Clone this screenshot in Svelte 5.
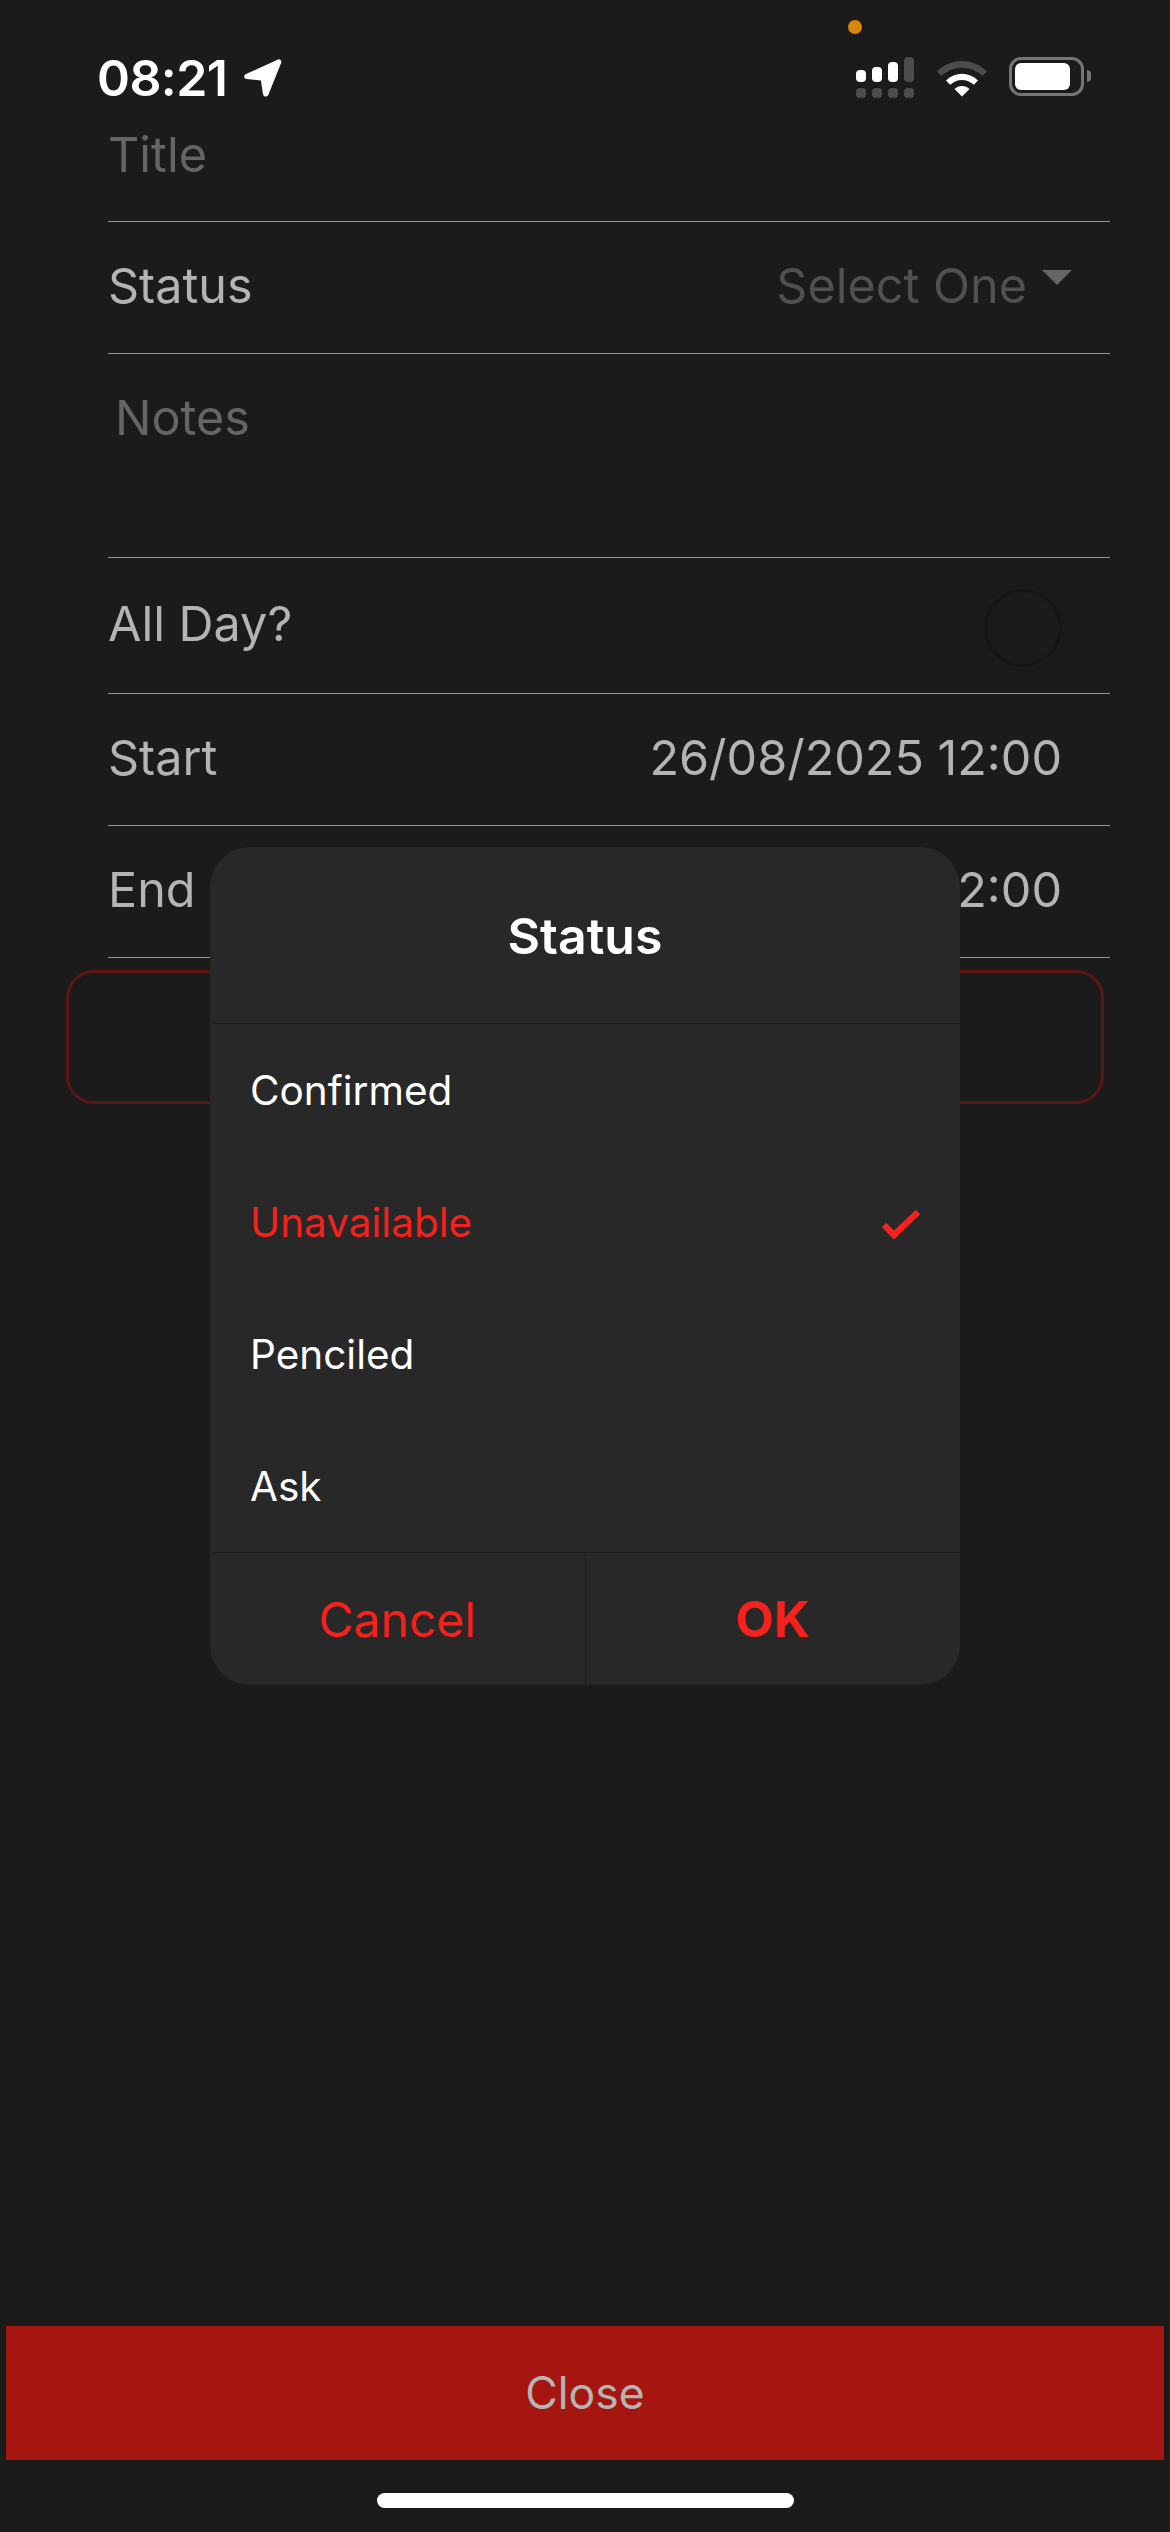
<script>
  const options = [
    { label: 'Confirmed', active: false },
    { label: 'Unavailable', active: true },
    { label: 'Penciled', active: false },
    { label: 'Ask', active: false }
  ];
</script>

<div class="page">
  <div class="dot"></div>
  <header class="status">
    <div class="clock">
      <span>08:21</span>
      <svg class="arrow" width="40" height="40" viewBox="0 0 40 40"><path d="M35 1.500C37 .8 39 2.500 38.200 4.800L25.500 36.500C24.200 39.500 20.500 39.200 20 36L17.900 22.500L3.500 21C.5 20.500 .3 17.200 3 16Z" fill="#fff"/></svg>
    </div>
    <div class="indicators">
      <svg width="60" height="42" viewBox="0 0 60 42">
        <rect x="0" y="13" width="10" height="12" rx="4" fill="#fff"/>
        <rect x="16" y="10" width="10" height="15" rx="4" fill="#fff"/>
        <rect x="32" y="5" width="10" height="20" rx="4" fill="#fff"/>
        <rect x="48" y="0" width="10" height="25" rx="4" fill="#4c4c4c"/>
        <rect x="0" y="31" width="10" height="10" rx="3.500" fill="#4c4c4c"/>
        <rect x="16" y="31" width="10" height="10" rx="3.500" fill="#4c4c4c"/>
        <rect x="32" y="31" width="10" height="10" rx="3.500" fill="#4c4c4c"/>
        <rect x="48" y="31" width="10" height="10" rx="3.500" fill="#4c4c4c"/>
      </svg>
      <svg class="wifi" width="52" height="38" viewBox="0 0 52 38">
        <path d="M1 12.500C15 -1.500 37 -1.500 51 12.500L46.500 17C35 6 17 6 5.500 17Z" fill="#4c4c4c"/>
        <path d="M10 21.500C19 12.500 33 12.500 42 21.500L37.800 25.800C31 19.500 21 19.500 14.200 25.800Z" fill="#fff"/>
        <path d="M18.500 30C22.500 26 29.500 26 33.500 30L26 37.500Z" fill="#fff"/>
      </svg>
      <div class="battery"><div class="cell"></div><div class="nub"></div></div>
    </div>
  </header>

  <section class="form">
    <div class="row title-row"><span class="placeholder">Title</span></div>
    <div class="row"><span>Status</span><span class="select">Select One<i class="caret"></i></span></div>
    <div class="row notes"><span class="placeholder">Notes</span></div>
    <div class="row tall"><span>All Day?</span><i class="radio"></i></div>
    <div class="row"><span>Start</span><span class="value">26/08/2025 12:00</span></div>
    <div class="row"><span>End</span><span class="value">26/08/2025 12:00</span></div>
  </section>
  <div class="outline"></div>

  <div class="spacer"></div>
  <button class="close">Close</button>
  <div class="home"></div>

  <div class="dialog">
    <h2>Status</h2>
    <ul>
      {#each options as o}
        <li class:active={o.active}>
          <span>{o.label}</span>
          {#if o.active}
            <svg width="38" height="36" viewBox="0 0 38 36"><path d="M2 21L12 31L36 8" fill="none" stroke="#f5211c" stroke-width="6.500"/></svg>
          {/if}
        </li>
      {/each}
    </ul>
    <footer>
      <button>Cancel</button>
      <button class="ok">OK</button>
    </footer>
  </div>
</div>

<style>
  :global(body) { margin: 0; background: #1b1b1b; }
  .page {
    position: relative;
    width: 1170px;
    height: 2532px;
    overflow: hidden;
    display: flex;
    flex-direction: column;
    background: #1b1b1b;
    font-family: Inter, "Noto Sans", sans-serif;
    color: #b4b4b4;
  }
  .dot {
    position: absolute;
    left: 848px;
    top: 20px;
    width: 14px;
    height: 14px;
    border-radius: 50%;
    background: #d9860f;
  }
  .status {
    height: 110px;
    padding: 0 86px 0 97px;
    box-sizing: border-box;
    display: flex;
    justify-content: space-between;
    align-items: flex-start;
    flex: none;
  }
  .clock {
    display: flex;
    align-items: center;
    gap: 16px;
    margin-top: 48px;
    height: 60px;
    color: #fff;
    font-size: 50px;
    font-weight: 600;
    letter-spacing: -0.6px;
  }
  .indicators {
    display: flex;
    align-items: flex-start;
    margin-top: 57px;
    margin-left: auto;
  }
  .wifi { margin: 2px 0 0 20px; }
  .battery {
    position: relative;
    margin-left: 21px;
    width: 75px;
    height: 39px;
    box-sizing: border-box;
    border: 3px solid #757575;
    border-radius: 12px;
    padding: 3px;
  }
  .cell { height: 100%; width: 55px; border-radius: 6px; background: #fff; }
  .nub {
    position: absolute;
    right: -10px;
    top: 10px;
    width: 4px;
    height: 12px;
    background: #757575;
    border-radius: 0 4px 4px 0;
  }
  .form { padding: 0 60px 0 108px; flex: none; }
  .row {
    display: flex;
    justify-content: space-between;
    align-items: center;
    height: 132px;
    border-bottom: 1px solid #959595;
    box-sizing: border-box;
    font-size: 48.500px;
    padding: 0 48px 4px 0;
  }
  .title-row { height: 112px; padding-bottom: 22px; }
  .notes { height: 204px; align-items: flex-start; padding: 34px 0 0 7px; }
  .tall { height: 136px; }
  .placeholder { color: #656565; }
  .select { color: #505050; display: flex; align-items: flex-start; gap: 15px; margin-right: -10px; }
  .caret {
    width: 0;
    height: 0;
    margin-top: 14px;
    border-left: 15px solid transparent;
    border-right: 15px solid transparent;
    border-top: 15px solid #656565;
  }
  .radio {
    width: 78px;
    height: 78px;
    margin-top: 8px;
    box-sizing: border-box;
    border: 3px solid #161616;
    border-radius: 50%;
  }
  .outline {
    margin: 12px 66px 0;
    height: 134px;
    box-sizing: border-box;
    border: 3px solid #5c1715;
    border-radius: 28px;
    flex: none;
  }
  .spacer { flex: 1; }
  .close {
    margin: 0 6px;
    height: 134px;
    border: 0;
    background: #a61611;
    color: #b4b4b4;
    font: inherit;
    font-size: 44.500px;
    flex: none;
  }
  .home {
    width: 417px;
    height: 15px;
    margin: 33px auto 24px;
    border-radius: 8px;
    background: #fff;
    flex: none;
  }
  .dialog {
    position: absolute;
    left: 210px;
    top: 847px;
    width: 750px;
    height: 838px;
    display: flex;
    flex-direction: column;
    background: #282828;
    border-radius: 40px;
    color: #fff;
  }
  h2 {
    margin: 0;
    height: 177px;
    line-height: 178px;
    box-sizing: border-box;
    border-bottom: 1px solid #1e1e1e;
    text-align: center;
    font-size: 50px;
    font-weight: 600;
  }
  ul { list-style: none; margin: 0; padding: 0; flex: 1; }
  li {
    height: 132px;
    padding: 0 40px;
    display: flex;
    justify-content: space-between;
    align-items: center;
    font-size: 40.500px;
  }
  li.active { color: #f5211c; }
  footer {
    height: 132px;
    border-top: 1px solid #1e1e1e;
    display: flex;
    flex: none;
  }
  footer button {
    flex: 1;
    border: 0;
    background: none;
    color: #f5211c;
    font: inherit;
    font-size: 48px;
  }
  footer .ok { font-weight: 700; font-size: 50px; border-left: 1px solid #1e1e1e; }
</style>
